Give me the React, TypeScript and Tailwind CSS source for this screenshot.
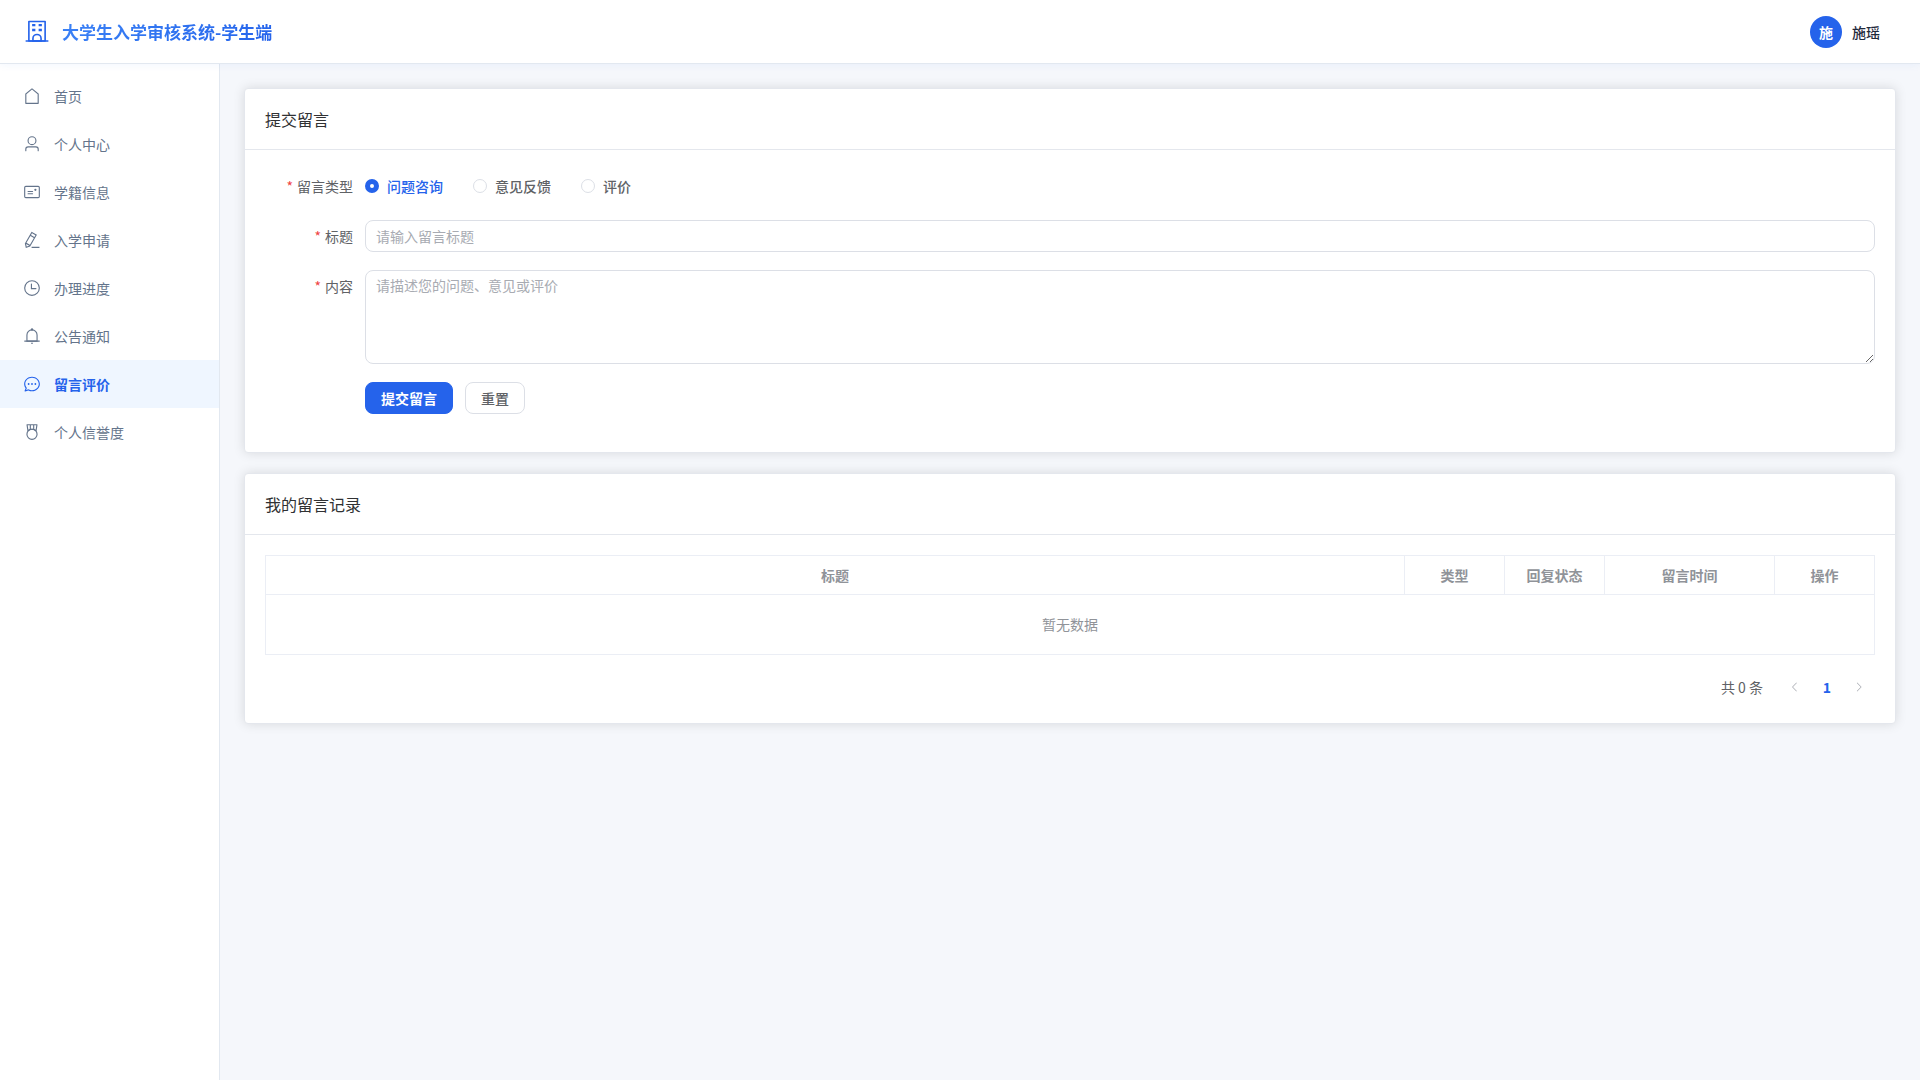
import React, { useState } from "react";

const house = [
  "M192 413.952V896h640V413.952L512 147.328 192 413.952zM139.52 374.4l352-293.312a32 32 0 0 1 40.96 0l352 293.312A32 32 0 0 1 896 398.976V928a32 32 0 0 1-32 32H160a32 32 0 0 1-32-32V399.04a32 32 0 0 1 11.52-24.64z",
];
const user = [
  "M512 512a192 192 0 1 0 0-384 192 192 0 0 0 0 384zm0 64a256 256 0 1 1 0-512 256 256 0 0 1 0 512zm320 320v-96a96 96 0 0 0-96-96H288a96 96 0 0 0-96 96v96a32 32 0 1 1-64 0v-96a160 160 0 0 1 160-160h448a160 160 0 0 1 160 160v96a32 32 0 1 1-64 0z",
];
const postcard = [
  "M160 224a32 32 0 0 0-32 32v512a32 32 0 0 0 32 32h704a32 32 0 0 0 32-32V256a32 32 0 0 0-32-32H160zm0-64h704a96 96 0 0 1 96 96v512a96 96 0 0 1-96 96H160a96 96 0 0 1-96-96V256a96 96 0 0 1 96-96z",
  "M704 320a64 64 0 1 1 0 128 64 64 0 0 1 0-128zM288 448h256q32 0 32 32t-32 32H288q-32 0-32-32t32-32zm0 128h256q32 0 32 32t-32 32H288q-32 0-32-32t32-32z",
];
const editPen = [
  "m199.04 672.64 193.984 112 224-387.968-193.92-112-224 388.032zm-23.872 60.16 32.896 148.288 144.896-45.696L175.168 732.8zM455.04 229.248l193.92 112 56.704-98.112-193.984-112-56.64 98.112zM104.32 708.8l384-665.024 304.768 175.936L409.152 884.8h.064l-248.448 78.336L104.32 708.8zm384 254.272v-64h448v64h-448z",
];
const clock = [
  "M512 896a384 384 0 1 0 0-768 384 384 0 0 0 0 768zm0 64a448 448 0 1 1 0-896 448 448 0 0 1 0 896z",
  "M480 256a32 32 0 0 1 32 32v256a32 32 0 0 1-64 0V288a32 32 0 0 1 32-32z",
  "M480 512h256q32 0 32 32t-32 32H480q-32 0-32-32t32-32z",
];
const bell = [
  "M512 64a64 64 0 0 1 64 64v64H448v-64a64 64 0 0 1 64-64z",
  "M256 768h512V448a256 256 0 1 0-512 0v320zm256-640a320 320 0 0 1 320 320v384H192V448a320 320 0 0 1 320-320z",
  "M96 768h832q32 0 32 32t-32 32H96q-32 0-32-32t32-32zm352 128h128a64 64 0 0 1-128 0z",
];
const chat = [
  "m174.72 855.68 135.296-45.12 23.68 11.84C388.096 849.536 448.576 864 512 864c211.84 0 384-166.784 384-352S723.84 160 512 160 128 326.784 128 512c0 69.12 24.96 139.264 70.848 199.232l22.08 28.8-46.272 115.584zm-45.248 82.56A32 32 0 0 1 89.6 896l58.368-145.92C94.72 680.32 64 596.864 64 512 64 299.904 256 96 512 96s448 203.904 448 416-192 416-448 416a461.056 461.056 0 0 1-206.912-48.384l-175.616 58.56z",
  "M512 563.2a51.2 51.2 0 1 1 0-102.4 51.2 51.2 0 0 1 0 102.4zm192 0a51.2 51.2 0 1 1 0-102.4 51.2 51.2 0 0 1 0 102.4zm-384 0a51.2 51.2 0 1 1 0-102.4 51.2 51.2 0 0 1 0 102.4z",
];
const medal = [
  "M512 896a256 256 0 1 0 0-512 256 256 0 0 0 0 512zm0 64a320 320 0 1 1 0-640 320 320 0 0 1 0 640z",
  "M576 128H448v200a286.72 286.72 0 0 1 64-8c19.52 0 40.832 2.688 64 8V128zm64 0v219.648c24.448 9.088 50.56 20.416 78.4 33.92L757.44 128H640zm-256 0H266.624l39.04 253.568c27.84-13.504 53.888-24.832 78.336-33.92V128zM229.312 64h565.376a32 32 0 0 1 31.616 36.864L768 480c-113.792-64-199.104-96-256-96-56.896 0-142.208 32-256 96l-58.304-379.136A32 32 0 0 1 229.312 64z",
];
const school = [
  "M224 128v704h576V128H224zm-32-64h640a32 32 0 0 1 32 32v768a32 32 0 0 1-32 32H192a32 32 0 0 1-32-32V96a32 32 0 0 1 32-32z",
  "M64 832h896v64H64zm256-640h128v96H320z",
  "M384 832h256v-64a128 128 0 1 0-256 0v64zm128-256a192 192 0 0 1 192 192v128H320V768a192 192 0 0 1 192-192zM320 384h128v96H320zm256-192h128v96H576zm0 192h128v96H576z",
];
const arrowLeft = [
  "M609.408 149.376 277.76 489.6a32 32 0 0 0 0 44.672l331.648 340.352a29.12 29.12 0 0 0 41.728 0 30.592 30.592 0 0 0 0-42.752L339.264 511.936l311.872-319.872a30.592 30.592 0 0 0 0-42.688 29.12 29.12 0 0 0-41.728 0z",
];
const arrowRight = [
  "M340.864 149.312a30.592 30.592 0 0 0 0 42.752L652.736 512 340.864 831.872a30.592 30.592 0 0 0 0 42.752 29.12 29.12 0 0 0 41.728 0L714.24 534.336a32 32 0 0 0 0-44.672L382.592 149.376a29.12 29.12 0 0 0-41.728 0z",
];

function Icon({ paths, className }: { paths: string[]; className: string }) {
  return (
    <svg viewBox="0 0 1024 1024" fill="currentColor" aria-hidden="true" className={className}>
      {paths.map((d) => (
        <path key={d} d={d} />
      ))}
    </svg>
  );
}

const menu = [
  { label: "首页", icon: house },
  { label: "个人中心", icon: user },
  { label: "学籍信息", icon: postcard },
  { label: "入学申请", icon: editPen },
  { label: "办理进度", icon: clock },
  { label: "公告通知", icon: bell },
  { label: "留言评价", icon: chat, active: true },
  { label: "个人信誉度", icon: medal },
];

const types = ["问题咨询", "意见反馈", "评价"];

function Card({ title, children }: { title: string; children: React.ReactNode }) {
  return (
    <section className="rounded border border-[#e4e7ed] bg-white shadow-[0_0_12px_rgba(0,0,0,0.12)]">
      <h2 className="border-b border-[#e4e7ed] px-5 py-[18px] text-base text-[#303133]">{title}</h2>
      <div className="p-5">{children}</div>
    </section>
  );
}

function FieldLabel({ htmlFor, id, children }: { htmlFor?: string; id?: string; children: string }) {
  const body = (
    <>
      <span className="mr-1 text-[#ef4444]">*</span>
      {children}
    </>
  );
  const cls = "h-8 w-[100px] shrink-0 pr-3 text-right leading-8 text-[#606266]";
  return htmlFor ? (
    <label htmlFor={htmlFor} className={cls}>
      {body}
    </label>
  ) : (
    <span id={id} className={cls}>
      {body}
    </span>
  );
}

export default function App() {
  const [type, setType] = useState(types[0]);

  return (
    <div className="flex min-h-screen flex-col bg-[#f5f7fb] font-['Noto_Sans_CJK_SC',sans-serif] text-sm text-[#303133]">
      <header className="relative flex h-16 items-center justify-between border-b border-[#e2e8f0] bg-white pr-10 pl-6 shadow-[0_1px_8px_rgba(37,99,235,0.06)]">
        <div className="flex items-center gap-3">
          <Icon paths={school} className="size-[26px] text-[#2563eb]" />
          <h1 className="bg-linear-135 from-[#3b82f6] to-[#2563eb] bg-clip-text text-[17px] leading-[26px] font-bold text-transparent">
            大学生入学审核系统-学生端
          </h1>
        </div>
        <button type="button" className="flex items-center gap-2.5">
          <span className="flex size-8 items-center justify-center rounded-full bg-[#2563eb] font-bold text-white">施</span>
          <span className="font-medium text-[#1e293b]">施瑶</span>
        </button>
      </header>

      <div className="flex flex-1">
        <nav className="w-[220px] shrink-0 border-r border-[#e2e8f0] bg-white pt-2">
          <ul>
            {menu.map((m) => (
              <li key={m.label}>
                <a
                  href="#"
                  aria-current={m.active ? "page" : undefined}
                  className={
                    m.active
                      ? "flex h-12 items-center gap-2.5 bg-[#eff6ff] px-5 leading-[21px] font-bold text-[#2563eb]"
                      : "flex h-12 items-center gap-2.5 px-5 leading-[21px] text-[#64748b]"
                  }
                >
                  <span className="flex w-6 justify-center">
                    <Icon paths={m.icon} className="size-[18px]" />
                  </span>
                  {m.label}
                </a>
              </li>
            ))}
          </ul>
        </nav>

        <main className="flex min-w-0 flex-1 flex-col gap-5 p-6">
          <Card title="提交留言">
            <form className="flex flex-col gap-[18px] pb-[18px]" onSubmit={(e) => e.preventDefault()}>
              <div className="flex" role="radiogroup" aria-labelledby="type-label">
                <FieldLabel id="type-label">留言类型</FieldLabel>
                <div className="flex gap-[30px]">
                  {types.map((t) => (
                    <label
                      key={t}
                      className={
                        t === type
                          ? "flex h-8 items-center gap-2 leading-[21px] font-medium text-[#2563eb]"
                          : "flex h-8 items-center gap-2 leading-[21px] font-medium text-[#606266]"
                      }
                    >
                      <input
                        type="radio"
                        name="type"
                        checked={t === type}
                        onChange={() => setType(t)}
                        className="size-3.5 appearance-none rounded-full border border-[#dcdfe6] bg-white checked:border-5 checked:border-[#2563eb]"
                      />
                      {t}
                    </label>
                  ))}
                </div>
              </div>
              <div className="flex">
                <FieldLabel htmlFor="title">标题</FieldLabel>
                <input
                  id="title"
                  type="text"
                  placeholder="请输入留言标题"
                  className="h-8 min-w-0 flex-1 rounded-lg border border-[#dcdfe6] bg-white px-2.5 pb-px leading-[21px] text-[#606266] placeholder:text-[#a8abb2]"
                />
              </div>
              <div className="flex">
                <FieldLabel htmlFor="content">内容</FieldLabel>
                <textarea
                  id="content"
                  rows={4}
                  placeholder="请描述您的问题、意见或评价"
                  className="min-w-0 flex-1 resize-y rounded-lg border border-[#dcdfe6] bg-white px-2.5 py-1 leading-[21px] text-[#606266] placeholder:text-[#a8abb2]"
                />
              </div>
              <div className="flex gap-3 pl-[100px]">
                <button type="submit" className="h-8 rounded-lg border border-[#2563eb] bg-[#2563eb] px-[15px] leading-[21px] font-bold text-white">
                  提交留言
                </button>
                <button type="reset" className="h-8 rounded-lg border border-[#dcdfe6] bg-white px-[15px] leading-[21px] font-medium text-[#606266]">
                  重置
                </button>
              </div>
            </form>
          </Card>

          <Card title="我的留言记录">
            <table className="w-full table-fixed border-collapse text-center leading-[21px] text-[#909399]">
              <colgroup>
                <col />
                <col className="w-[100px]" />
                <col className="w-[100px]" />
                <col className="w-[170px]" />
                <col className="w-[100px]" />
              </colgroup>
              <thead>
                <tr className="h-[39px]">
                  {["标题", "类型", "回复状态", "留言时间", "操作"].map((h) => (
                    <th key={h} className="border border-[#ebeef5] font-bold">
                      {h}
                    </th>
                  ))}
                </tr>
              </thead>
              <tbody>
                <tr className="h-[60px]">
                  <td colSpan={5} className="border border-[#ebeef5]">
                    暂无数据
                  </td>
                </tr>
              </tbody>
            </table>
            <div className="mt-4 flex items-center justify-end">
              <span className="mr-4 text-[#606266]">共 0 条</span>
              <button type="button" aria-label="上一页" disabled className="flex size-8 items-center justify-center text-[#a8abb2]">
                <Icon paths={arrowLeft} className="size-3" />
              </button>
              <button type="button" aria-current="page" className="size-8 font-bold text-[#2563eb]">
                1
              </button>
              <button type="button" aria-label="下一页" disabled className="flex size-8 items-center justify-center text-[#a8abb2]">
                <Icon paths={arrowRight} className="size-3" />
              </button>
            </div>
          </Card>
        </main>
      </div>
    </div>
  );
}
